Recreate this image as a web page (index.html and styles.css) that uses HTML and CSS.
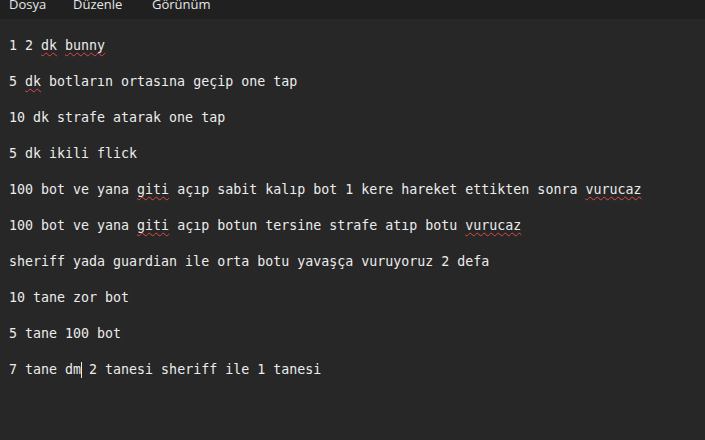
FILE: index.html
```html
<!DOCTYPE html>
<html lang="tr">
<head>
<meta charset="utf-8">
<title>Not Defteri</title>
<link rel="stylesheet" href="styles.css">
</head>
<body>
<div class="window">
  <nav class="menubar">
    <span class="menu-item m1">Dosya</span>
    <span class="menu-item m2">Düzenle</span>
    <span class="menu-item m3">Görünüm</span>
  </nav>
  <div class="editor">
    <div class="line">1 2 <span class="sp">dk</span> <span class="sp">bunny</span></div>
    <div class="line"></div>
    <div class="line">5 <span class="sp">dk</span> botların ortasına geçip one tap</div>
    <div class="line"></div>
    <div class="line">10 dk strafe atarak one tap</div>
    <div class="line"></div>
    <div class="line">5 dk ikili flick</div>
    <div class="line"></div>
    <div class="line">100 bot ve yana <span class="sp">giti</span> açıp sabit kalıp bot 1 kere hareket ettikten sonra <span class="sp">vurucaz</span></div>
    <div class="line"></div>
    <div class="line">100 bot ve yana <span class="sp">giti</span> açıp botun tersine strafe atıp botu <span class="sp">vurucaz</span></div>
    <div class="line"></div>
    <div class="line">sheriff yada guardian ile orta botu yavaşça vuruyoruz 2 defa</div>
    <div class="line"></div>
    <div class="line">10 tane zor bot</div>
    <div class="line"></div>
    <div class="line">5 tane 100 bot</div>
    <div class="line"></div>
    <div class="line">7 tane dm<span class="caret"></span> 2 tanesi sheriff ile 1 tanesi</div>
  </div>
</div>
</body>
</html>
```
FILE: styles.css
```css
html, body {
  margin: 0;
  padding: 0;
  background: #272727;
  height: 100%;
  overflow: hidden;
}

.window {
  display: flex;
  flex-direction: column;
  height: 100%;
}

.menubar {
  display: flex;
  align-items: flex-start;
  height: 19px;
  flex: none;
  background: #202020;
  font-family: "Open Sans", "Noto Sans", sans-serif;
  font-size: 13px;
  color: #e6e6e6;
  overflow: hidden;
}

.menu-item {
  display: block;
  margin-top: -2px;
  line-height: 13px;
  white-space: nowrap;
}

.m1 { margin-left: 9px; width: 64px; }
.m2 { width: 79px; }

.editor {
  flex: 1;
  padding: 18px 0 0 9px;
  font-family: "DejaVu Sans Mono", "Liberation Mono", monospace;
  font-size: 13.3px;
  line-height: 18px;
  color: #ececec;
}

.line {
  height: 18px;
  white-space: pre;
}

.sp {
  text-decoration: underline wavy #e04848;
  text-decoration-thickness: 1px;
  text-underline-offset: 2px;
  text-decoration-skip-ink: none;
}

.caret {
  display: inline-block;
  width: 1px;
  height: 16px;
  background: #e8e8e8;
  vertical-align: -4px;
  margin-right: -1px;
}
```
